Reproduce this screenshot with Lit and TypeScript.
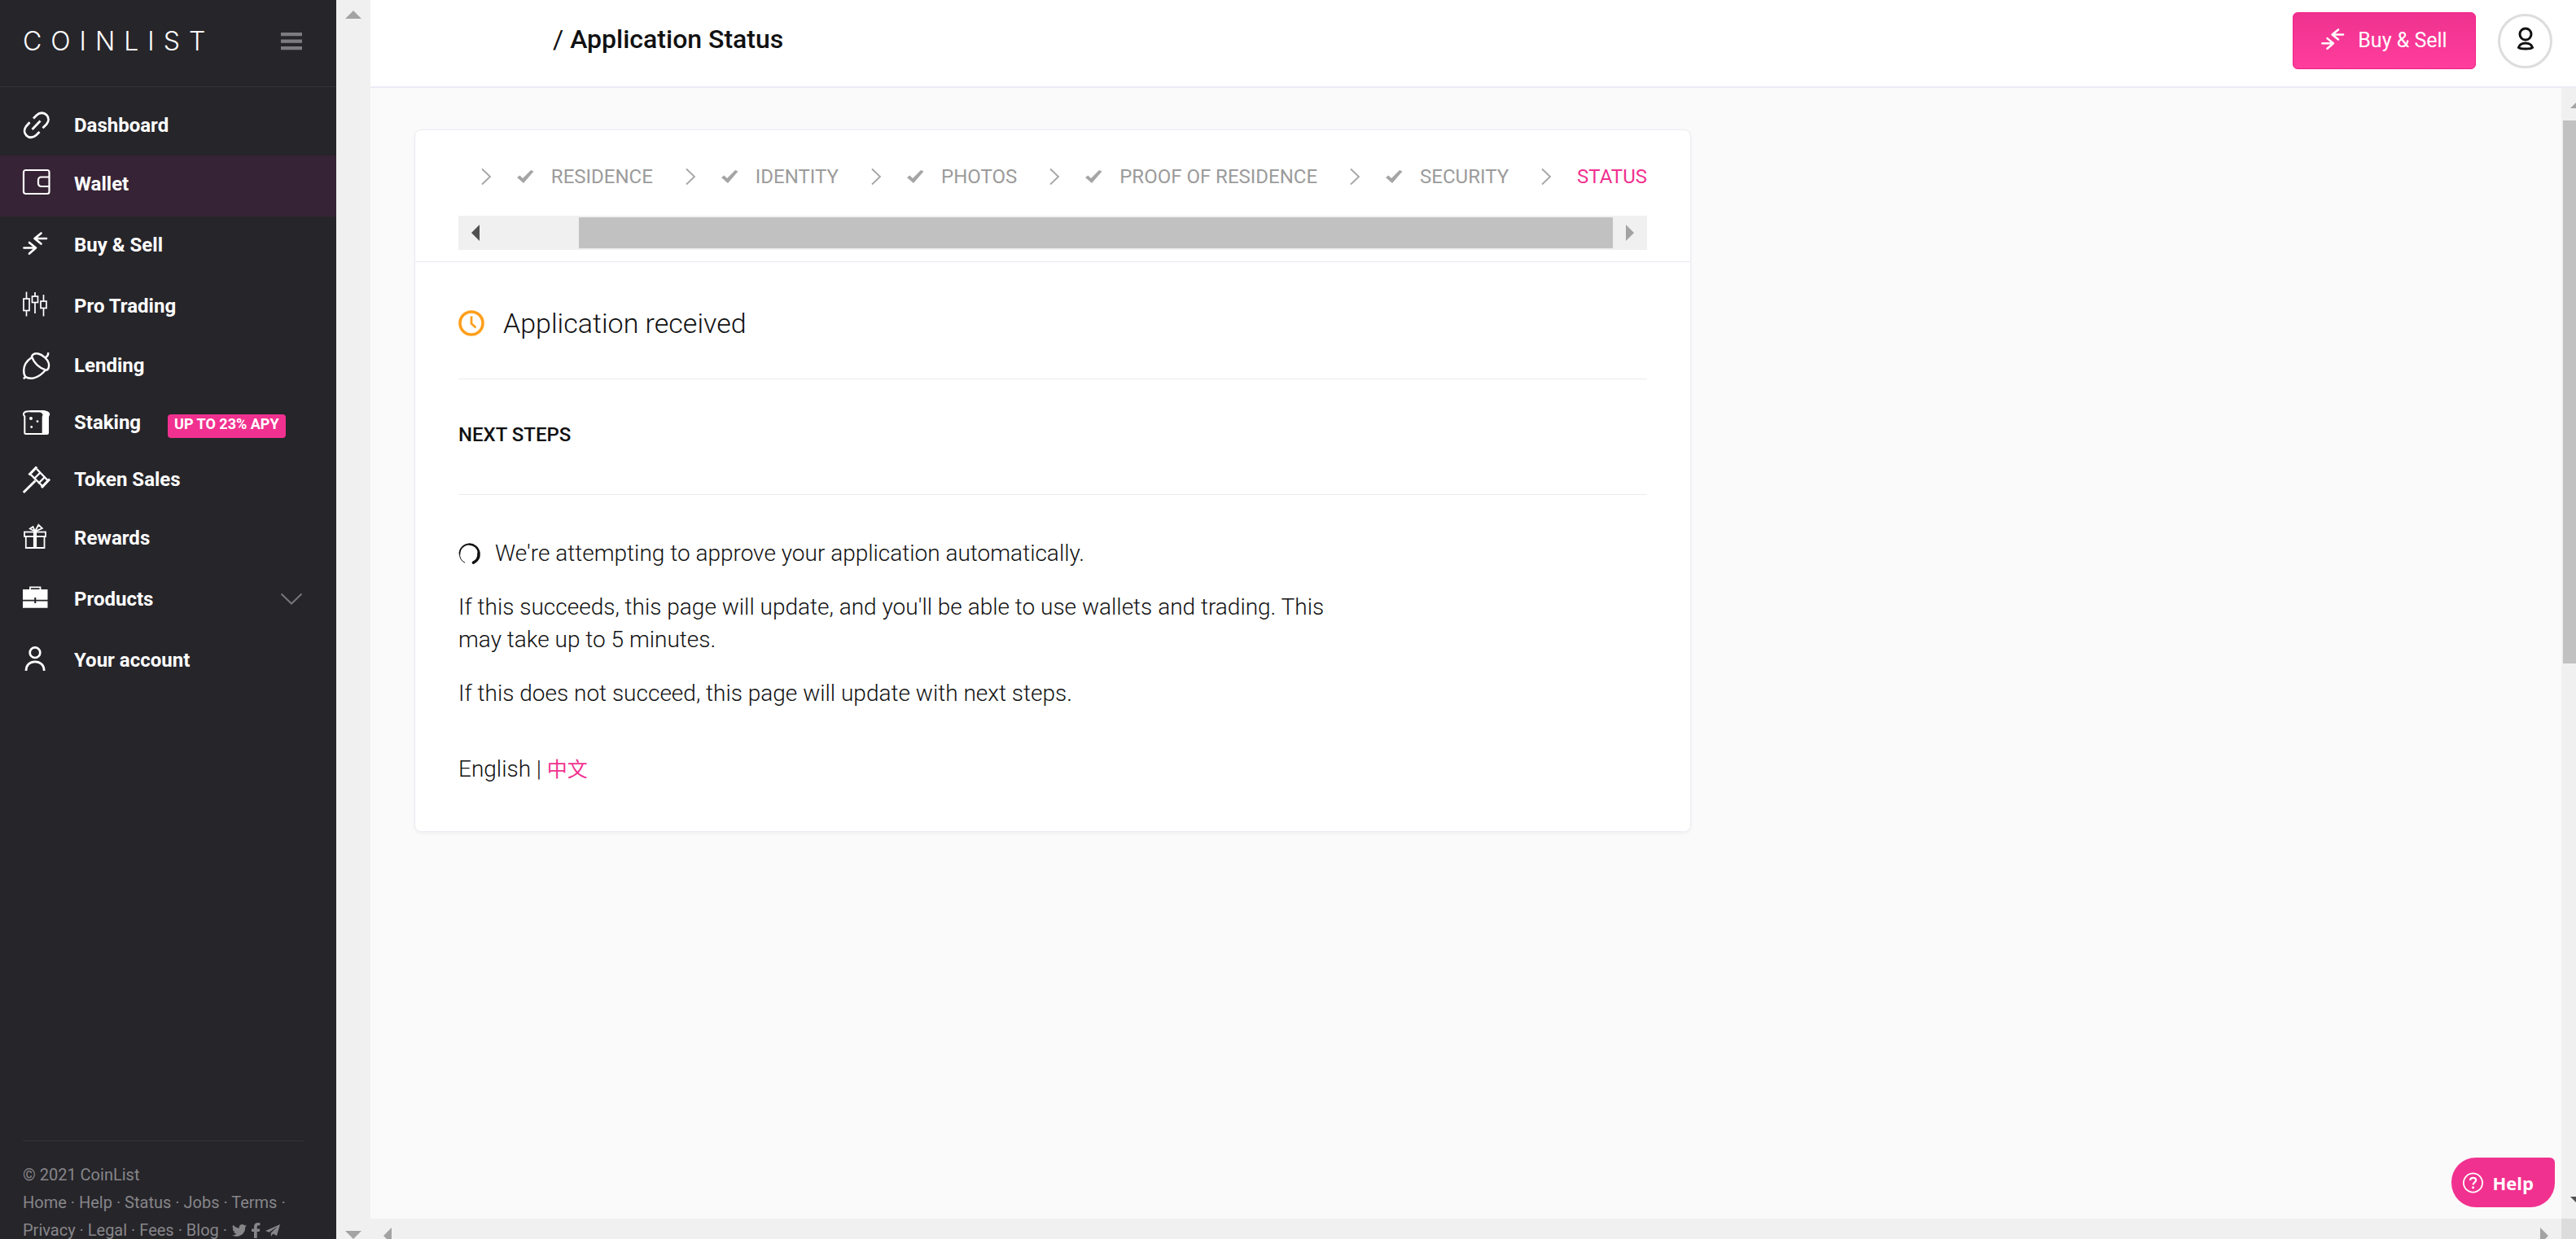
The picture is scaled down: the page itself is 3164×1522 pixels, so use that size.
import { LitElement, html, svg, css, nothing, type TemplateResult } from "lit";
import { customElement } from "lit/decorators.js";
import { classMap } from "lit/directives/class-map.js";

interface NavItem {
  label: string;
  icon: TemplateResult;
  tall?: boolean;
  active?: boolean;
  badge?: string;
  expandable?: boolean;
}

const arrows = svg`<g fill="none" stroke="currentColor" stroke-width="2.7" stroke-linecap="round" stroke-linejoin="round">
  <path d="M14.5 9H29M22.5 2.5L14.5 9L22.5 15.5"/><path d="M1.5 20.5H16M8 14L16 20.5L8 27.5"/></g>`;

const NAV: NavItem[] = [
  {
    label: "Dashboard",
    icon: svg`<g fill="none" stroke="currentColor" stroke-width="2.8">
      <path d="M13 8.5L17 4.5C21 .8 26 1 29 4C32.200 7.200 32.200 12 29 15.800L24.500 20.300"/>
      <path d="M20.500 25L16.500 29C12.500 32.700 7.500 32.500 4.500 29.500C1.300 26.300 1.300 21.500 4.500 17.700L8.500 13.200"/>
      <path d="M11.500 22L21.500 11.500"/></g>`,
  },
  {
    label: "Wallet",
    tall: true,
    active: true,
    icon: svg`<g fill="none" stroke="currentColor" stroke-width="2.2">
      <rect x="1" y="0" width="31.500" height="29" rx="2.500"/>
      <path d="M32 8.500H22.500a3.500 3.500 0 0 0-3.500 3.500v4.500a3.500 3.500 0 0 0 3.500 3.500H32"/></g>`,
  },
  { label: "Buy & Sell", tall: true, icon: arrows },
  {
    label: "Pro Trading",
    tall: true,
    icon: svg`<g fill="none" stroke="currentColor" stroke-width="1.700">
      <path d="M4.500 -.5V8M4.500 22.500V29.500M15 0V5M15 12.500V26M25.500 3V11M25.500 19.500V29.500"/>
      <rect x="1" y="8" width="7" height="14.500"/><rect x="11.500" y="5" width="7" height="7.500"/>
      <rect x="22" y="11" width="7" height="8.500"/></g>`,
  },
  {
    label: "Lending",
    icon: svg`<g fill="none" stroke="currentColor" stroke-width="2.4" stroke-linejoin="round">
      <path d="M11 6C12 3 15 1.800 19 2.500C24 3.600 30.500 9 31.800 14C32.800 18.500 31.500 22.600 28.500 22.600C21 20.500 13.500 14 11 6Z"/>
      <path d="M11 7C5 11 1.200 17 1.200 23C1.200 27 1.800 29 3.200 30.800C8 34.300 18 34 27.500 23"/>
      <path d="M.8 33.200L4 30.600M26.800 7.600C29.500 6.500 31.400 4.200 31.200 1"/></g>`,
  },
  {
    label: "Staking",
    badge: "UP TO 23% APY",
    icon: svg`<path fill="none" stroke="currentColor" stroke-width="2" d="M25 3.200H7C1 3.200 -.3 6.500 2.300 9.500V29.500Q2.300 31 4 31H25"/>
      <path fill="currentColor" d="M9 2H24C30 2 33.200 4.500 33.200 6.500C33.200 8.500 32 9 32 10.500V29.500Q32 32 29.500 32H23.700V10C25.500 7.500 24 4.500 20 4.300H9Z"/>
      <circle fill="currentColor" cx="10" cy="12" r="2"/><circle fill="currentColor" cx="18" cy="15.700" r="1.400"/>
      <circle fill="currentColor" cx="10.700" cy="22.500" r="1.400"/>`,
  },
  {
    label: "Token Sales",
    icon: svg`<g fill="none" stroke="currentColor" stroke-width="2.4">
      <path stroke-width="3" d="M.8 33L15.500 18.500"/><path stroke-width="3.200" d="M17.200 1.500L7.600 11.500M33 16.500L23 27"/>
      <path d="M17 4L30.500 18M9.800 11L24 25M22 8L13.500 16.500M27.500 13.500L19 22"/></g>`,
  },
  {
    label: "Rewards",
    tall: true,
    icon: svg`<g fill="none" stroke="currentColor" stroke-width="1.800">
      <rect x="2" y="9.500" width="26" height="5.500"/><path d="M3.800 15V29H26.500V15"/>
      <path d="M15 8.800L8.800 5.500L12.500 3Z M15 8.800L19.300 .8L23.800 5Z"/><path stroke-width="4.200" d="M15 9.500V29"/></g>`,
  },
  {
    label: "Products",
    tall: true,
    expandable: true,
    icon: svg`<path fill="none" stroke="currentColor" stroke-width="1.800" d="M9 5.500V2.300H21.500V5.500"/>
      <path fill="currentColor" d="M0 5H30.500V17.800H16.300V15H14.200V17.800H0ZM0 19.600H14.200V22H16.300V19.600H30.500V27.700H0Z"/>`,
  },
  {
    label: "Your account",
    tall: true,
    icon: svg`<g fill="none" stroke="currentColor" stroke-width="2.700"><circle cx="15" cy="7.700" r="6.300"/>
      <path d="M4 30C4 23 8.500 18.800 15 18.800S26.200 23 26.200 30"/></g>`,
  },
];

const STEPS = ["Residence", "Identity", "Photos", "Proof of residence", "Security"];

@customElement("app-root")
export class AppRoot extends LitElement {
  static styles = css`
    :host {
      display: block;
      font-family: Roboto, "Liberation Sans", sans-serif;
      color: #111112;
    }
    * { box-sizing: border-box; }
    a { color: inherit; text-decoration: none; }
    button { font: inherit; color: inherit; background: none; border: 0; padding: 0; cursor: pointer; }
    ul, ol { list-style: none; margin: 0; padding: 0; }
    h1, h2, h3, p { margin: 0; font-weight: inherit; }
    svg { display: block; flex: none; overflow: visible; }

    .app { display: grid; grid-template-columns: 413px 42px minmax(0, 1fr); height: 100vh; overflow: hidden; }

    .side { display: flex; flex-direction: column; min-height: 0; overflow: hidden; background: #26252a; color: #fff; }
    .side-head {
      display: flex; align-items: center; justify-content: space-between;
      height: 107px; padding: 0 42px 4px 28px; border-bottom: 1px solid #343338;
    }
    .logo { font: 300 32px/40px Inter, sans-serif; letter-spacing: 11px; }
    .burger { color: #7d7d80; }
    .nav { padding-top: 14px; font-size: 24px; line-height: 30px; font-weight: 700; }
    .nav-link { display: flex; align-items: center; width: 100%; height: 70px; padding: 0 42px 4px 28px; }
    .nav-link.tall { height: 75px; padding-bottom: 5px; }
    .nav-link.active { background: #362335; }
    .nav-icon { margin-right: 29px; }
    .caret { margin-left: auto; color: #77777a; }
    .badge {
      margin: 9px 0 0 33px; padding: 0 8px 5px; border-radius: 4px;
      background: #f1318f; font-size: 18px; line-height: 24px;
    }
    .foot {
      margin: auto 40px -6px 28px; padding-top: 24px; border-top: 1px solid #343338;
      color: #868689; font-size: 20px; line-height: 34px; white-space: nowrap;
    }
    .foot-row { display: flex; align-items: center; gap: 6px; }

    .bar { display: flex; background: #f0f0f0; color: #a3a3a3; }
    .bar.vertical { flex-direction: column; justify-content: space-between; overflow: hidden; }
    .bar.outer { align-items: center; height: 100%; padding: 13px 0 0; }
    .bar.page { padding: 15px 0 17px 2px; }
    .bar.page .arrow { margin-left: 9px; }
    .bar.bottom { justify-content: space-between; padding: 11px 16px 0; overflow: hidden; }
    .arrow.dark { color: #505050; }
    .track { display: flex; flex: 1; }
    .bar.vertical .track { flex-direction: column; margin: 15px 0; }
    .thumb { background: #c1c1c1; }
    .thumb.tall { height: 51%; }
    .corner { background: #dcdcdc; }

    .main { display: grid; grid-template-rows: 108px minmax(0, 1fr); min-width: 0; }
    .top {
      display: flex; align-items: center; gap: 27px; padding: 0 29px 6px 224px;
      background: #fff; border-bottom: 2px solid #ebebf5;
    }
    .title { flex: 1; font-size: 32px; line-height: 40px; padding-bottom: 4px; }
    .title b { font-weight: 500; }
    .trade {
      display: flex; align-items: center; justify-content: center; gap: 17px; width: 225px; height: 70px;
      border: 1px solid #f01f86; border-radius: 6px; color: #fff; font-size: 25px; padding-bottom: 2px;
      background: linear-gradient(#ef328f, #ff3d9c);
    }
    .avatar {
      display: flex; align-items: center; justify-content: center;
      width: 67px; height: 67px; border: 3px solid #ddd; border-radius: 50%;
    }
    .view {
      display: grid; grid-template: minmax(0, 1fr) 25px / minmax(0, 1fr) 18px;
      background: #fafafa; min-height: 0;
    }
    .content { padding: 51px 54px; overflow: hidden; }
    .card {
      max-width: 1568px; background: #fff; border: 1px solid #ebebf3; border-radius: 8px;
      box-shadow: 0 2px 4px #0000000a;
    }
    .card-head { padding: 40px 53px 14px; border-bottom: 1px solid #e8e8f0; }
    .steps {
      display: flex; justify-content: flex-end; gap: 40px; overflow: hidden; white-space: nowrap;
      font-size: 24px; line-height: 34px; text-transform: uppercase; color: #9b9b9b;
    }
    .step { display: flex; align-items: center; }
    .step .chev { margin-right: 32px; color: #a5a5a5; }
    .step .check { margin-right: 21px; color: #a5a5a5; }
    .step.current { color: #f1318f; }
    .bar.card-bar { align-items: center; height: 42px; margin-top: 31px; padding: 2px 16px; }
    .card-bar .track { height: 38px; margin: 0 16px; }
    .card-bar .track::before { content: ""; flex: 1; }
    .card-bar .thumb { flex: 12; }

    .card-body { padding: 0 53px 56px; font-size: 28px; font-weight: 300; line-height: 40px; }
    .received {
      display: flex; align-items: center; gap: 23px; height: 144px; padding-top: 6px;
      border-bottom: 1px solid #ebebf0; font-size: 34px;
    }
    .next {
      height: 142px; padding-top: 48px; border-bottom: 1px solid #ebebf0;
      font-size: 24px; font-weight: 500; text-transform: uppercase;
    }
    .copy { display: flex; flex-direction: column; gap: 26px; max-width: 75%; padding-top: 52px; }
    .waiting { display: flex; align-items: center; gap: 18px; }
    .lang { margin-top: 53px; }
    .lang-link { color: #f1318f; font-family: "Noto Sans CJK SC", sans-serif; font-size: 25px; font-weight: 400; line-height: 34px; }

    .help {
      position: fixed; right: 26px; bottom: 39px; display: flex; align-items: center; gap: 12px;
      height: 61px; padding: 0 26px 0 14px; border-radius: 30px 6px 30px 30px;
      background: #f1318f; color: #fff; font: 700 22px/30px "Open Sans", sans-serif;
    }
  `;

  private arrow(dir: "up" | "down" | "left" | "right", dark = false) {
    const side = dir === "left" || dir === "right";
    const shapes = { up: "0,10 20,10 10,0", down: "0,0 20,0 10,10", left: "10,0 10,20 0,10", right: "0,0 0,20 10,10" };
    return html`<svg class=${classMap({ arrow: true, dark })} width=${side ? 10 : 20} height=${side ? 20 : 10}>
      <polygon fill="currentColor" points=${shapes[dir]}></polygon>
    </svg>`;
  }

  private chevron() {
    return html`<svg class="chev" width="12" height="20" viewBox="0 0 12 20">
      <path fill="none" stroke="currentColor" stroke-width="1.800" d="M1 .5L11 10L1 19.500" />
    </svg>`;
  }

  private navItem(item: NavItem) {
    const inner = html`<svg class="nav-icon" width="34" height="34" viewBox="0 0 34 34" aria-hidden="true">${item.icon}</svg>
      <span>${item.label}</span>
      ${item.badge ? html`<span class="badge">${item.badge}</span>` : nothing}
      ${item.expandable
        ? html`<svg class="caret" width="26" height="14" viewBox="0 0 26 14">
            <path fill="none" stroke="currentColor" stroke-width="2" d="M.5 .5L13 12.500L25.500 .5" />
          </svg>`
        : nothing}`;
    const cls = classMap({ "nav-link": true, tall: !!item.tall, active: !!item.active });
    return html`<li>
      ${item.expandable
        ? html`<button class=${cls} aria-expanded="false">${inner}</button>`
        : html`<a class=${cls} href="#">${inner}</a>`}
    </li>`;
  }

  render() {
    return html`<div class="app">
      <aside class="side">
        <div class="side-head">
          <a class="logo" href="#">COINLIST</a>
          <button class="burger" aria-label="Menu">
            <svg width="26" height="22" viewBox="0 0 26 22"><path fill="currentColor" d="M0 0H26V4.300H0ZM0 8.500H26V12.800H0ZM0 17H26V21.300H0Z" /></svg>
          </button>
        </div>
        <nav class="nav"><ul>${NAV.map((i) => this.navItem(i))}</ul></nav>
        <footer class="foot">
          <div>© 2021 CoinList</div>
          <div><a href="#">Home</a> · <a href="#">Help</a> · <a href="#">Status</a> · <a href="#">Jobs</a> · <a href="#">Terms</a> ·</div>
          <div class="foot-row">
            <span><a href="#">Privacy</a> · <a href="#">Legal</a> · <a href="#">Fees</a> · <a href="#">Blog</a> ·</span>
            <a href="#" aria-label="Twitter"><svg width="18" height="15" viewBox="0 0 24 20"><path fill="currentColor" d="M24 2.400a10 10 0 0 1-2.800.8A4.900 4.900 0 0 0 23.300.5a10 10 0 0 1-3.100 1.200A4.900 4.900 0 0 0 11.800 6.200 14 14 0 0 1 1.700 1a4.900 4.900 0 0 0 1.500 6.600A4.900 4.900 0 0 1 1 7v.1A4.900 4.900 0 0 0 4.900 12a5 5 0 0 1-2.200.1 4.900 4.900 0 0 0 4.600 3.400A9.900 9.900 0 0 1 0 17.500 14 14 0 0 0 21.500 5a10 10 0 0 0 2.500-2.600Z" /></svg></a>
            <a href="#" aria-label="Facebook"><svg width="11" height="19" viewBox="0 0 11 19"><path fill="currentColor" d="M3 19V11H0V7.500H3V5C3 1.800 4.800 0 7.700 0L10.500 .3V3.300H8.800C7.200 3.300 6.700 4.200 6.700 5.200V7.500H10.300L9.700 11H6.700V19Z" /></svg></a>
            <a href="#" aria-label="Telegram"><svg width="18" height="15" viewBox="0 0 18 15"><path fill="currentColor" d="M18 0L0 8L4.600 9.700L15 2.500L6.800 10.500V15L9.300 11.600L14 14Z" /></svg></a>
          </div>
        </footer>
      </aside>

      <div class="bar vertical outer" aria-hidden="true">${this.arrow("up")}${this.arrow("down")}</div>

      <div class="main">
        <header class="top">
          <h1 class="title">/ <b>Application Status</b></h1>
          <button class="trade">
            <svg width="28" height="28" viewBox="0 1 30 30">${arrows}</svg>
            <span>Buy &amp; Sell</span>
          </button>
          <button class="avatar" aria-label="Account">
            <svg width="20" height="34" viewBox="0 0 20 34">
              <g fill="none" stroke="currentColor" stroke-width="3">
                <circle cx="10" cy="9" r="7" />
                <path d="M1.500 25.500C2.500 22 6 20 10 20S17.500 22 18.500 25.500C16.500 27.500 3.500 27.500 1.500 25.500Z" />
              </g>
            </svg>
          </button>
        </header>

        <div class="view">
          <main class="content">
            <section class="card">
              <div class="card-head">
                <ol class="steps">
                  ${STEPS.map(
                    (s) => html`<li class="step">
                      ${this.chevron()}
                      <svg class="check" width="21" height="16" viewBox="0 0 21 16">
                        <path fill="currentColor" d="M0 9L3.500 6.500L7 10L17 0L20.500 1.500L8 16Z" />
                      </svg>
                      <span>${s}</span>
                    </li>`,
                  )}
                  <li class="step current" aria-current="step">${this.chevron()}<span>Status</span></li>
                </ol>
                <div class="bar card-bar" aria-hidden="true">
                  ${this.arrow("left", true)}
                  <div class="track"><div class="thumb"></div></div>
                  ${this.arrow("right")}
                </div>
              </div>
              <div class="card-body">
                <h2 class="received">
                  <svg width="32" height="32" viewBox="0 0 32 32">
                    <g fill="none" stroke="#ff9f1c" stroke-width="3.600">
                      <circle cx="16" cy="16" r="14" />
                      <path stroke-width="2.800" d="M16 7.500V16.500L21.500 21.500" />
                    </g>
                  </svg>
                  <span>Application received</span>
                </h2>
                <h3 class="next">Next steps</h3>
                <div class="copy">
                  <p class="waiting">
                    <svg width="27" height="27" viewBox="0 0 27 27">
                      <g fill="none" stroke="#111112">
                        <path stroke-width="1" d="M8 24.200A12 12 0 0 1 1.500 13.500" />
                        <path stroke-width="1.800" d="M1.500 14A12 12 0 0 1 13.500 1.500" />
                        <path stroke-width="2.600" d="M13 1.500A12 12 0 0 1 25.300 12" />
                        <path stroke-width="3.600" stroke-linecap="round" d="M25 12.500A12 12 0 0 1 18.500 24.200" />
                      </g>
                    </svg>
                    <span>We're attempting to approve your application automatically.</span>
                  </p>
                  <p>If this succeeds, this page will update, and you'll be able to use wallets and trading. This may take up to 5 minutes.</p>
                  <p>If this does not succeed, this page will update with next steps.</p>
                </div>
                <p class="lang">English | <a class="lang-link" href="#" lang="zh">中文</a></p>
              </div>
            </section>
          </main>
          <div class="bar vertical page" aria-hidden="true">
            ${this.arrow("up")}
            <div class="track"><div class="thumb tall"></div></div>
            ${this.arrow("down", true)}
          </div>
          <div class="bar bottom" aria-hidden="true">${this.arrow("left")}${this.arrow("right")}</div>
          <div class="corner"></div>
        </div>
      </div>

      <button class="help">
        <svg width="25" height="26" viewBox="0 0 25 26">
          <circle cx="12.500" cy="13" r="11.600" fill="none" stroke="currentColor" stroke-width="1.800" />
          <path fill="none" stroke="currentColor" stroke-width="2.200" d="M9 10C9 7.800 10.500 6.800 12.600 6.800S16.200 8 16.200 9.800C16.200 12.500 12.600 12.300 12.600 15.500" />
          <circle cx="12.600" cy="18.700" r="1.500" fill="currentColor" />
        </svg>
        <span>Help</span>
      </button>
    </div>`;
  }
}
